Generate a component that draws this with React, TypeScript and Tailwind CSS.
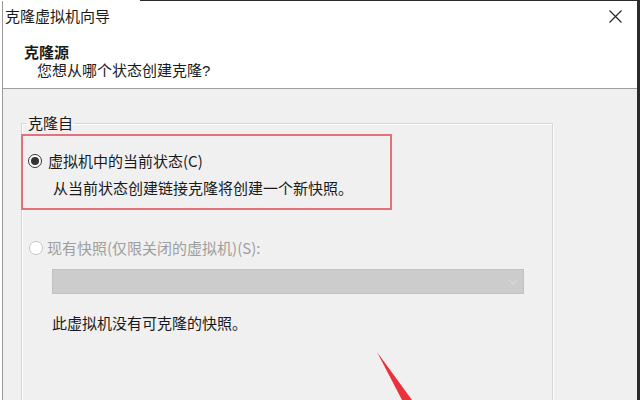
import React from "react";

const font = { fontFamily: '"Noto Sans CJK SC", "Noto Sans", sans-serif' };
// tighter primary metrics for the two close header lines
const tight = { fontFamily: '"Liberation Sans", "Noto Sans CJK SC", sans-serif' };

const Radio = ({ checked, disabled }: { checked?: boolean; disabled?: boolean }) => (
  <span
    className={
      "flex h-[14px] w-[14px] shrink-0 items-center justify-center rounded-full border " +
      (disabled ? "border-[#c4c4c4] bg-white" : "border-[#333333] bg-white")
    }
  >
    {checked && <span className="h-[8px] w-[8px] rounded-full bg-[#333333]" />}
  </span>
);

const CloseIcon = () => (
  <svg width="13" height="13" viewBox="0 0 13 13">
    <path d="M0.5 0.5 L12.5 12.5 M12.5 0.5 L0.5 12.5" stroke="#222" strokeWidth="1.1" />
  </svg>
);

export default function App() {
  return (
    <div className="relative flex h-[400px] w-[640px] flex-col overflow-hidden bg-white text-[#1a1a1a]" style={font}>
      {/* window top edge */}
      <div className="flex h-px shrink-0">
        <div className="w-[140px] bg-white" />
        <div className="flex-1 bg-[#2b2b2b]" />
      </div>

      <div className="flex flex-1">
        <div className="w-[2px] bg-white" />
        <div className="flex flex-1 flex-col border-l border-[#9a9a9a]">
          {/* header */}
          <div className="flex h-[88px] shrink-0 flex-col border-b border-[#a0a0a0] bg-white">
            <div className="flex h-[30px] items-center justify-between pl-[2px] pr-[15px]">
              <span className="text-[15px] leading-[18px]">克隆虚拟机向导</span>
              <CloseIcon />
            </div>
            <div className="pl-[21px] pt-[13px] text-[15px] font-bold leading-[17px]" style={tight}>
              克隆源
            </div>
            <div className="mt-[1px] pl-[34px] text-[15px] leading-[17px]" style={tight}>
              您想从哪个状态创建克隆?
            </div>
          </div>

          {/* body */}
          <div className="flex-1 bg-[#f0f0f0] pt-[24px]">
            <fieldset className="ml-[18px] h-[320px] w-[532px] border border-[#d6d6d6] shadow-[inset_1px_1px_0_#ffffff,1px_1px_0_#ffffff]">
              <legend className="ml-[5px] px-[1px] text-[15px] leading-[20px]">克隆自</legend>

              <div className="-ml-px mt-[1px] h-[76px] w-[371px] border-2 border-[#e3727b] pt-[15px]">
                <label className="flex h-[20px] items-center gap-[6px] pl-[5px] text-[15px]">
                  <Radio checked />
                  <span>虚拟机中的当前状态(C)</span>
                </label>
                <div className="mt-[7px] h-[20px] pl-[30px] text-[15px] leading-[20px]">
                  从当前状态创建链接克隆将创建一个新快照。
                </div>
              </div>

              <label className="mt-[28px] flex h-[20px] items-center gap-[4px] pl-[7px] text-[15px] text-[#9e9e9e]">
                <Radio disabled />
                <span>现有快照(仅限关闭的虚拟机)(S):</span>
              </label>

              <div className="ml-[30px] mt-[11px] flex h-[25px] w-[472px] items-center justify-end border border-[#c2c2c2] bg-[#cccccc] pr-[5px]">
                <svg width="10" height="6" viewBox="0 0 10 6">
                  <path d="M0.5 0.5 L5 5 L9.5 0.5" fill="none" stroke="#e0e0e0" strokeWidth="1" />
                </svg>
              </div>

              <div className="mt-[19px] pl-[30px] text-[15px] leading-[20px]">此虚拟机没有可克隆的快照。</div>
            </fieldset>
          </div>
        </div>
        <div className="w-[3px] bg-[#2b2b2b]" />
      </div>

      {/* red annotation arrow */}
      <svg className="pointer-events-none absolute left-0 top-0" width="640" height="400" viewBox="0 0 640 400">
        <polygon points="377,352 412,400 402,400" fill="#e8313b" />
      </svg>
    </div>
  );
}
